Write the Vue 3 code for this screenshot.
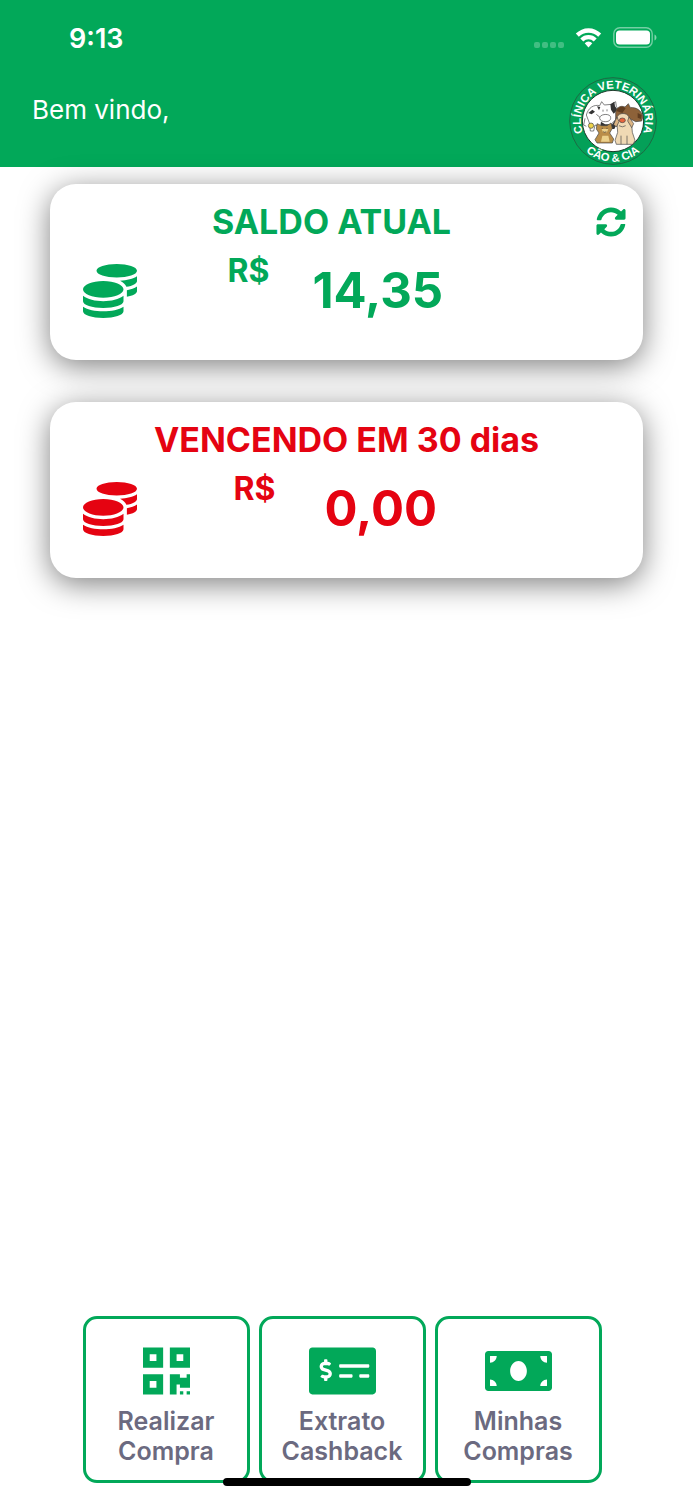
<template>
  <div class="screen">
    <header class="top">
      <div class="status-bar">
        <span class="clock">9:13</span>
        <div class="status-icons">
          <span class="signal"><i></i><i></i><i></i><i></i></span>
          <svg class="wifi" viewBox="0 0 26 20" aria-hidden="true">
            <path d="M0.3 5.6a18 18 0 0 1 25.4 0l-3 3.1a13.8 13.8 0 0 0-19.4 0z" />
            <path d="M4.8 10.4a11.6 11.6 0 0 1 16.4 0l-3 3a7.5 7.5 0 0 0-10.4 0z" />
            <path d="M9.2 15.2a5.3 5.3 0 0 1 7.6 0L13 19.4z" />
          </svg>
          <svg class="battery" viewBox="0 0 44 22" aria-hidden="true">
            <rect x="0.8" y="0.8" width="38.4" height="19.4" rx="6" fill="none" stroke="#fff" stroke-opacity="0.45" stroke-width="1.4" />
            <rect x="3" y="3.5" width="34" height="14" rx="3.5" fill="#fff" />
            <path d="M41.5 7.5c2.6 1.2 2.6 4.8 0 6z" fill="#fff" fill-opacity="0.5" />
          </svg>
        </div>
      </div>
      <div class="welcome">
        <p>Bem vindo,</p>
        <svg class="logo" viewBox="-132 -132 264 264" role="img" aria-label="Clínica Veterinária Cão &amp; Cia">
          <defs>
            <path id="arc-top" d="M-89 38A97 97 0 1 1 89 38" />
            <path id="arc-bottom" d="M-112 50A123 123 0 0 0 112 50" />
          </defs>
          <circle r="130" fill="#04a058" stroke="#1c6b44" stroke-width="3" />
          <circle r="92" fill="#fff" stroke="#1c3a2a" stroke-width="3" />
          <text class="logo-text"><textPath href="#arc-top" startOffset="50%" text-anchor="middle">CLÍNICA VETERINÁRIA</textPath></text>
          <text class="logo-text"><textPath href="#arc-bottom" startOffset="50%" text-anchor="middle">CÃO &amp; CIA</textPath></text>
          <g stroke="#444" stroke-width="2" stroke-linejoin="round">
            <!-- cow -->
            <path fill="#fff" d="M-80-18c6-22 22-32 40-28l6-12 8 10 22-2 12-8 2 14 8 12-10 28-20 20h-28l-14-4-4 18h-10l-2-22z" />
            <path fill="#333" stroke="none" d="M-74-24l12-10 8 6-10 8zM-8-50l12-8 2 14 8 10-12 12-8-12zM-36 2l12 8h22l8-12 4 14-6 12h-34l-8-10zM-48-44l10 2-4 10z" />
            <path fill="#fff" d="M-40-8c-2-12 26-16 32-6 4 10-4 16-14 16s-16-2-18-10z" />
            <path fill="none" d="M-84-8l-4 20 8 4M-50-20l10 8M-30-34v6M-18-35v6" />
            <circle cx="-66" cy="14" r="8" fill="#eed44a" />
            <!-- horse -->
            <path fill="#8d6239" d="M8-26c2-14 14-22 28-16l10-10 6 12c18-2 32 8 38 26l-4 14-18 2-16-8-18 6-26-4z" />
            <path fill="#5f3d20" stroke="none" d="M10-30c6-14 20-16 28-8l-10 14zM74-24l12 6-2 12-10-4z" />
            <!-- cat -->
            <path fill="#ba8d48" d="M-48 8l14 6h16l12-8 4 16-8 14 12 18-4 12h-46l-6-10 12-20-8-12z" />
            <path fill="#ecd08a" stroke="none" d="M-32 44h18l4 18h-26zM-34 24h20l-4 10h-12z" />
            <path fill="none" d="M-34 22h4M-20 22h4M-30 32q5 4 10 0" />
            <!-- dog -->
            <path fill="#f0d9b4" d="M12-12c6-14 30-14 36 0l8 22 2 24 8 24-6 12H10l-4-12 8-24-2-24z" />
            <path fill="#dcb483" d="M12-12L2 10l8 8 8-16zM48-12l14 20-6 12-12-20z" />
            <ellipse cx="28" cy="-2" rx="9" ry="7" fill="#e8643c" />
            <path fill="none" d="M18 14q10 7 20 0M24 44v26M42 44v26" />
          </g>
        </svg>
      </div>
    </header>

    <main class="balances">
      <section v-for="card in cards" :key="card.title" class="card" :class="card.tone">
        <div class="card-head">
          <h2>{{ card.title }}</h2>
          <button v-if="card.refresh" type="button" class="refresh" aria-label="Atualizar saldo">
            <svg viewBox="0 0 512 512"><path :d="icons.sync" /></svg>
          </button>
        </div>
        <div class="card-body">
          <svg class="coins" viewBox="0 0 512 512" aria-hidden="true"><path :d="icons.coins" /></svg>
          <div class="amount">
            <span class="currency">R$</span>
            <span class="value">{{ card.value }}</span>
          </div>
        </div>
      </section>
    </main>

    <nav class="actions">
      <button v-for="action in actions" :key="action.icon" type="button" class="action">
        <svg :viewBox="action.box" :class="{ narrow: action.narrow }" aria-hidden="true"><path :d="icons[action.icon]" /></svg>
        <span>{{ action.first }}<br />{{ action.second }}</span>
      </button>
    </nav>
    <div class="home-indicator"></div>
  </div>
</template>

<script setup>
const cards = [
  { title: 'SALDO ATUAL', value: '14,35', tone: 'green', refresh: true },
  { title: 'VENCENDO EM 30 dias', value: '0,00', tone: 'red', refresh: false }
];

const actions = [
  { icon: 'qrcode', box: '0 0 448 512', narrow: true, first: 'Realizar', second: 'Compra' },
  { icon: 'check', box: '0 0 640 512', first: 'Extrato', second: 'Cashback' },
  { icon: 'bill', box: '0 0 640 512', first: 'Minhas', second: 'Compras' }
];

const icons = {
  coins: 'M0 405.3V448c0 35.3 86 64 192 64s192-28.7 192-64v-42.7C342.7 434.4 267.2 448 192 448S41.3 434.4 0 405.3zM320 128c106 0 192-28.7 192-64S426 0 320 0 128 28.7 128 64s86 64 192 64zM0 300.4V352c0 35.3 86 64 192 64s192-28.7 192-64v-51.6c-41.3 34-116.9 51.6-192 51.6S41.3 334.4 0 300.4zm416 11c57.3-11.1 96-31.7 96-55.4v-42.7c-23.2 16.4-57.3 27.6-96 34.5v63.6zM192 160C86 160 0 195.8 0 240s86 80 192 80 192-35.8 192-80-86-80-192-80zm219.3 56.3c60-10.8 100.7-32 100.7-56.3v-42.7c-35.5 25.1-96.5 38.6-160.7 41.8 29.5 14.3 51.2 33.5 60 57.2z',
  sync: 'M370.72 133.28C339.458 104.008 298.888 87.962 255.848 88c-77.458.068-144.328 53.178-162.791 126.85-1.344 5.363-6.122 9.15-11.651 9.15H24.103c-7.498 0-13.194-6.807-11.807-14.176C33.933 94.924 134.813 8 256 8c66.448 0 126.791 26.136 171.315 68.685L463.03 40.97C478.149 25.851 504 36.559 504 57.941V192c0 13.255-10.745 24-24 24H345.941c-21.382 0-32.09-25.851-16.971-40.971l41.75-41.749zM32 296h134.059c21.382 0 32.09 25.851 16.971 40.971l-41.75 41.75c31.262 29.273 71.835 45.319 114.876 45.28 77.418-.07 144.315-53.144 162.787-126.849 1.344-5.363 6.122-9.15 11.651-9.15h57.304c7.498 0 13.194 6.807 11.807 14.176C478.067 417.076 377.187 504 256 504c-66.448 0-126.791-26.136-171.315-68.685L48.97 471.03C33.851 486.149 8 475.441 8 454.059V320c0-13.255 10.745-24 24-24z',
  qrcode: 'M0 224h192V32H0v192zM64 96h64v64H64V96zm192-64v192h192V32H256zm128 128h-64V96h64v64zM0 480h192V288H0v192zm64-128h64v64H64v-64zm352-64h32v128h-96v-32h-32v96h-64V288h96v32h64v-32zm0 160h32v32h-32v-32zm-64 0h32v32h-32v-32z',
  check: 'M608 32H32C14.33 32 0 46.33 0 64v384c0 17.67 14.33 32 32 32h576c17.67 0 32-14.33 32-32V64c0-17.67-14.33-32-32-32zM176 327.88V344c0 4.42-3.58 8-8 8h-16c-4.42 0-8-3.58-8-8v-16.29c-11.29-.58-22.27-4.52-31.37-11.35-3.9-2.93-4.1-8.77-.57-12.14l11.75-11.21c2.77-2.64 6.89-2.76 10.13-.73 3.87 2.42 8.26 3.72 12.82 3.72h28.11c6.5 0 11.8-5.92 11.8-13.19 0-5.95-3.61-11.19-8.77-12.73l-45-13.5c-18.59-5.58-31.58-23.42-31.58-43.39 0-24.52 19.05-44.44 42.67-45.07V152c0-4.42 3.58-8 8-8h16c4.42 0 8 3.58 8 8v16.29c11.29.58 22.27 4.51 31.37 11.35 3.9 2.93 4.1 8.77.57 12.14l-11.75 11.21c-2.77 2.64-6.89 2.76-10.13.73-3.87-2.43-8.26-3.72-12.82-3.72h-28.11c-6.5 0-11.8 5.92-11.8 13.19 0 5.95 3.61 11.19 8.77 12.73l45 13.5c18.59 5.58 31.58 23.42 31.58 43.39 0 24.53-19.05 44.44-42.67 45.07zM416 312c0 4.42-3.58 8-8 8H296c-4.42 0-8-3.58-8-8v-16c0-4.42 3.58-8 8-8h112c4.42 0 8 3.58 8 8v16zm160 0c0 4.42-3.58 8-8 8h-80c-4.42 0-8-3.58-8-8v-16c0-4.42 3.58-8 8-8h80c4.42 0 8 3.58 8 8v16zm0-96c0 4.42-3.58 8-8 8H296c-4.42 0-8-3.58-8-8v-16c0-4.42 3.58-8 8-8h272c4.42 0 8 3.58 8 8v16z',
  bill: 'M608 64H32C14.33 64 0 78.33 0 96v320c0 17.67 14.33 32 32 32h576c17.67 0 32-14.33 32-32V96c0-17.67-14.33-32-32-32zM48 400v-64c35.35 0 64 28.65 64 64H48zm0-224v-64h64c0 35.35-28.65 64-64 64zm272 176c-44.19 0-80-42.99-80-96 0-53.02 35.82-96 80-96s80 42.98 80 96c0 53.03-35.83 96-80 96zm272 48h-64c0-35.35 28.65-64 64-64v64zm0-224c-35.35 0-64-28.65-64-64h64v64z'
};
</script>

<style>
body {
  margin: 0;
  background: #fff;
}
</style>

<style scoped>
.screen {
  position: relative;
  box-sizing: border-box;
  display: flex;
  flex-direction: column;
  min-height: 100vh;
  font-family: Inter, "Liberation Sans", sans-serif;
}

.top {
  background: #02a859;
  color: #fff;
}

.status-bar {
  display: flex;
  justify-content: space-between;
  align-items: center;
  height: 76px;
  padding: 0 36px 0 69px;
}

.clock {
  font-size: 27px;
  font-weight: 600;
}

.status-icons {
  display: flex;
  align-items: center;
  gap: 11px;
}

.signal {
  display: flex;
  align-self: flex-end;
  gap: 2px;
  padding-bottom: 1px;
}

.signal i {
  width: 6px;
  height: 6px;
  border-radius: 2px;
  background: rgba(255, 255, 255, 0.25);
}

.wifi {
  width: 27px;
  height: 20px;
  fill: #fff;
}

.battery {
  width: 44px;
  height: 22px;
}

.welcome {
  display: flex;
  justify-content: space-between;
  align-items: flex-start;
  height: 91px;
  padding: 0 36px 0 32px;
}

.welcome p {
  margin: 18px 0 0;
  font-size: 26px;
  line-height: 32px;
}

.logo {
  width: 88px;
  height: 90px;
}

.logo-text {
  fill: #fff;
  font-family: "Liberation Sans", sans-serif;
  font-size: 34px;
  font-weight: 700;
}

.balances {
  display: flex;
  flex: 1;
  flex-direction: column;
  gap: 42px;
  padding: 17px 50px 0;
}

.card {
  padding: 18px 17px 20px;
  border-radius: 26px;
  background: #fff;
  box-shadow: 0 6px 30px rgba(0, 0, 0, 0.5);
}

.green {
  color: #02a859;
}

.red {
  color: #e50311;
}

.card svg {
  fill: currentColor;
}

.card-head {
  display: flex;
  align-items: center;
}

.card-head h2 {
  flex: 1;
  margin: 0;
  font-size: 34px;
  font-weight: 700;
  line-height: 40px;
  text-align: center;
}

.refresh {
  padding: 0;
  border: none;
  background: none;
  color: inherit;
  cursor: pointer;
}

.refresh svg {
  display: block;
  width: 30px;
  height: 30px;
}

.card-body {
  display: grid;
  grid-template-columns: 21% 54% 1fr;
  align-items: center;
  min-height: 98px;
}

.coins {
  width: 54px;
  height: 54px;
  margin-left: 16px;
}

.amount {
  display: flex;
  justify-content: space-evenly;
  font-weight: 700;
}

.currency {
  font-size: 32px;
  line-height: 20px;
}

.value {
  font-size: 49px;
  line-height: 60px;
}

.actions {
  display: flex;
  justify-content: center;
  padding-bottom: 17px;
}

.action {
  box-sizing: border-box;
  display: flex;
  flex-direction: column;
  align-items: center;
  gap: 8px;
  width: 167px;
  height: 167px;
  margin-right: 9px;
  padding: 25px 0 0;
  border: 3px solid #02a859;
  border-radius: 14px;
  background: #fff;
  color: #6b6a80;
  font-family: inherit;
  font-size: 25px;
  font-weight: 600;
  line-height: 30px;
  cursor: pointer;
}

.action svg {
  width: 67px;
  height: 54px;
  fill: #02a859;
}

.action svg.narrow {
  width: 47px;
}

.home-indicator {
  position: absolute;
  bottom: 14px;
  left: 50%;
  width: 248px;
  height: 8px;
  border-radius: 4px;
  background: #000;
  transform: translateX(-50%);
}
</style>
